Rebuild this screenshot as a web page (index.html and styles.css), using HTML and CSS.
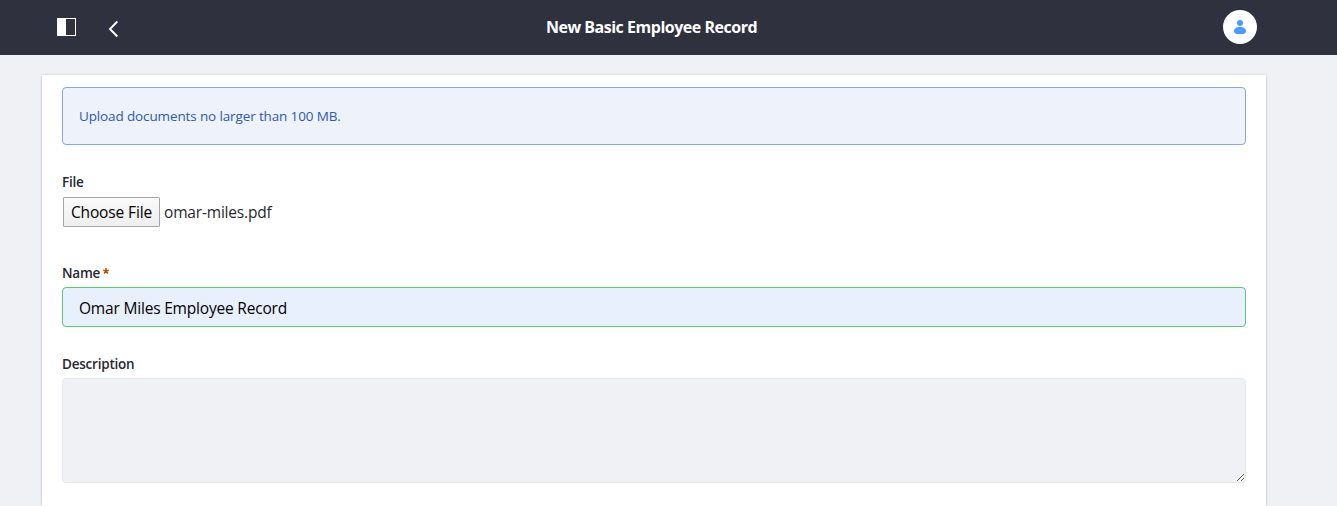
FILE: index.html
```html
<!DOCTYPE html>
<html lang="en">
<head>
<meta charset="utf-8">
<title>New Basic Employee Record</title>
<link rel="stylesheet" href="styles.css">
</head>
<body>
<header class="bar">
  <div class="bar-left">
    <svg class="icon-panel" width="19" height="18" viewBox="0 0 19 18"><rect x=".5" y=".5" width="18" height="17" fill="none" stroke="#fff"/><rect width="9" height="18" fill="#fff"/></svg>
    <svg class="icon-back" width="11" height="18" viewBox="0 0 11 18"><path d="M9.300 1.500 2 9 9.300 16.500" fill="none" stroke="#fff" stroke-width="1.900"/></svg>
  </div>
  <h1 class="title">New Basic Employee Record</h1>
  <div class="bar-right">
    <span class="avatar"><svg width="12" height="14" viewBox="0 0 12 14" fill="#4b9bff"><circle cx="6" cy="3" r="3"/><path d="M0 11C0 8.500 2.500 7 6 7s6 1.500 6 4c0 2.300-1.700 3-3 3H3c-1.300 0-3-.7-3-3z"/></svg></span>
  </div>
</header>
<main class="sheet">
  <div class="alert"><span class="alert-text">Upload documents no larger than 100 MB.</span></div>
  <div class="group group-file">
    <label class="label">File</label>
    <div class="file"><button class="file-button" type="button">Choose File</button><span class="file-name">omar-miles.pdf</span></div>
  </div>
  <div class="group group-name">
    <label class="label" for="name"><span class="label-name">Name</span><svg class="required" width="6" height="6" viewBox="0 0 6 6"><path d="M3 3V0M3 3 .2 2.100M3 3l2.800-.9M3 3 1.200 5.500M3 3l1.800 2.500" fill="none" stroke="#b95000" stroke-width="1.500"/></svg></label>
    <input class="input" id="name" type="text" value="Omar Miles Employee Record">
  </div>
  <div class="group">
    <label class="label" for="description">Description</label>
    <textarea class="textarea" id="description"></textarea>
  </div>
</main>
</body>
</html>
```
FILE: styles.css
```css
* { box-sizing: border-box; }
body {
  margin: 0;
  height: 506px;
  display: flex;
  flex-direction: column;
  background: #f0f1f5;
  color: #272833;
  font-family: "Open Sans", "Noto Sans", sans-serif;
}
.bar {
  flex: none;
  height: 55px;
  padding: 0 80px 1px 57px;
  display: grid;
  grid-template-columns: 1fr auto 1fr;
  align-items: center;
  background: #30313f;
}
.bar-left { display: flex; align-items: center; gap: 32px; }
.icon-back { margin: 4px 0 0 0; }
.bar-right { display: flex; justify-content: flex-end; }
.title {
  margin: 0 11px 0 0;
  color: #fff;
  font-size: 16px;
  line-height: 24px;
  font-weight: 700;
  letter-spacing: -0.48px;
  white-space: nowrap;
}
.avatar {
  width: 34px;
  height: 34px;
  border-radius: 50%;
  background: #fff;
  display: flex;
  align-items: center;
  justify-content: center;
}
.sheet {
  flex: none;
  width: 1224px;
  height: 431px;
  margin: 20px 0 0 42px;
  padding: 12px 20px 0;
  background: #fff;
  box-shadow: 0 1px 3px -1px rgba(0, 0, 0, .3), 0 0 3px rgba(39, 40, 51, .12);
}
.alert {
  height: 58px;
  padding: 0 16px;
  display: flex;
  align-items: center;
  border: 1px solid #89a7e0;
  border-radius: 4px;
  background: #eef2fa;
  color: #2e5aac;
  font-size: 13.5px;
  letter-spacing: -0.13px;
  margin-bottom: 27px;
}
.group { display: flex; flex-direction: column; }
.group-file { height: 91px; }
.group-name { height: 91px; }
.label {
  height: 24px;
  display: flex;
  align-items: flex-start;
  font-size: 13.5px;
  line-height: 20px;
  font-weight: 600;
  letter-spacing: -0.22px;
}
.required { margin: 5px 0 0 3px; }
.file {
  display: flex;
  align-items: center;
  padding: 1px 0 0 1px;
  font-size: 15.5px;
  letter-spacing: -0.18px;
}
.file-button {
  width: 97px;
  height: 30px;
  padding: 0;
  border: 1px solid #a6a6a6;
  border-radius: 1px;
  background: linear-gradient(#fafafa, #eee);
  color: #000;
  font: 15.5px "Open Sans", "Noto Sans", sans-serif;
  letter-spacing: -0.12px;
  white-space: nowrap;
}
.file-name { margin-left: 4px; }
.input {
  width: 100%;
  height: 40px;
  padding: 1px 16px 0;
  border: 1px solid #5aca75;
  border-radius: 4px;
  outline: none;
  background: #e8f0fe;
  color: #000;
  font: 15.5px "Open Sans", "Noto Sans", sans-serif;
  letter-spacing: -0.19px;
}
.textarea {
  width: 100%;
  height: 105px;
  padding: 8px 16px;
  border: 1px solid #e7e7ed;
  border-radius: 4px;
  outline: none;
  resize: vertical;
  background: #f0f1f5;
}
```
